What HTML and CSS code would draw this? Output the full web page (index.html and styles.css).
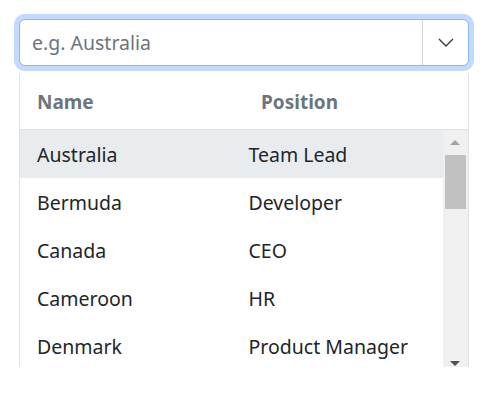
FILE: index.html
```html
<!DOCTYPE html>
<html lang="en">
<head>
    <meta charset="UTF-8">
    <meta name="viewport" content="width=device-width, initial-scale=1.0">
    <title>Country Picker</title>
    <link rel="stylesheet" href="styles.css">
</head>
<body>
    <div class="container">
        <div class="combo">
            <input type="text" class="combo-input" placeholder="e.g. Australia">
            <button class="combo-toggle" aria-label="Open">
                <svg width="16" height="9" viewBox="0 0 16 9">
                    <path d="M1 1 L8 8 L15 1" fill="none" stroke="#343a40" stroke-width="1.4"/>
                </svg>
            </button>
        </div>
        <div class="dropdown">
            <div class="dropdown-head">
                <div>Name</div>
                <div>Position</div>
            </div>
            <div class="dropdown-list">
                <div class="rows">
                    <div class="row active"><div>Australia</div><div>Team Lead</div></div>
                    <div class="row"><div>Bermuda</div><div>Developer</div></div>
                    <div class="row"><div>Canada</div><div>CEO</div></div>
                    <div class="row"><div>Cameroon</div><div>HR</div></div>
                    <div class="row"><div>Denmark</div><div>Product Manager</div></div>
                </div>
                <div class="scrollbar">
                    <div class="arrow up"></div>
                    <div class="thumb"></div>
                    <div class="arrow down"></div>
                </div>
            </div>
        </div>
    </div>
</body>
</html>
```

FILE: styles.css
```css
body {
    font-family: "Noto Sans", "Open Sans", sans-serif;
    margin: 0;
    padding: 0;
    background: #fff;
}
.container {
    width: 450px;
    padding: 19px 0 0 19px;
}
.combo {
    display: flex;
    height: 47px;
    border: 1px solid #86b7fe;
    border-radius: 6px;
    box-shadow: 0 0 0 5px #c2dafd;
    box-sizing: border-box;
    background: #fff;
}
.combo-input {
    flex: 1;
    border: none;
    outline: none;
    padding: 0 0 0 12px;
    font-family: inherit;
    font-size: 19.5px;
    color: #212529;
    background: transparent;
    border-radius: 6px 0 0 6px;
}
.combo-input::placeholder {
    color: #6c757d;
}
.combo-toggle {
    width: 46px;
    border: none;
    border-left: 1px solid #ced4da;
    background: transparent;
    padding: 0;
    display: flex;
    align-items: center;
    justify-content: center;
}
.dropdown {
    margin-top: 8px;
    border-left: 1px solid #dee2e6;
    border-right: 1px solid #dee2e6;
}
.dropdown-head {
    display: grid;
    grid-template-columns: 1fr 1fr;
    height: 55px;
    align-items: center;
    border-bottom: 1px solid #dee2e6;
    font-weight: 700;
    font-size: 19px;
    color: #6c757d;
}
.dropdown-head div,
.row div {
    padding-left: 17px;
}
.dropdown-list {
    display: flex;
    height: 237px;
}
.rows {
    flex: 1;
    overflow: hidden;
}
.row {
    display: grid;
    grid-template-columns: 1fr 1fr;
    height: 48px;
    align-items: center;
    font-size: 19.5px;
    color: #212529;
}
.row.active {
    background: #e9ecef;
}
.scrollbar {
    width: 25px;
    height: 247px;
    flex: none;
    background: #f0f0f0;
    position: relative;
}
.thumb {
    position: absolute;
    left: 2px;
    right: 2px;
    top: 25px;
    height: 54px;
    background: #c1c1c1;
}
.arrow {
    position: absolute;
    left: 7px;
    width: 0;
    height: 0;
    border-left: 5px solid transparent;
    border-right: 5px solid transparent;
}
.arrow.up {
    top: 10px;
    border-bottom: 5px solid #a3a3a3;
}
.arrow.down {
    top: 231px;
    border-top: 5px solid #505050;
}
```
